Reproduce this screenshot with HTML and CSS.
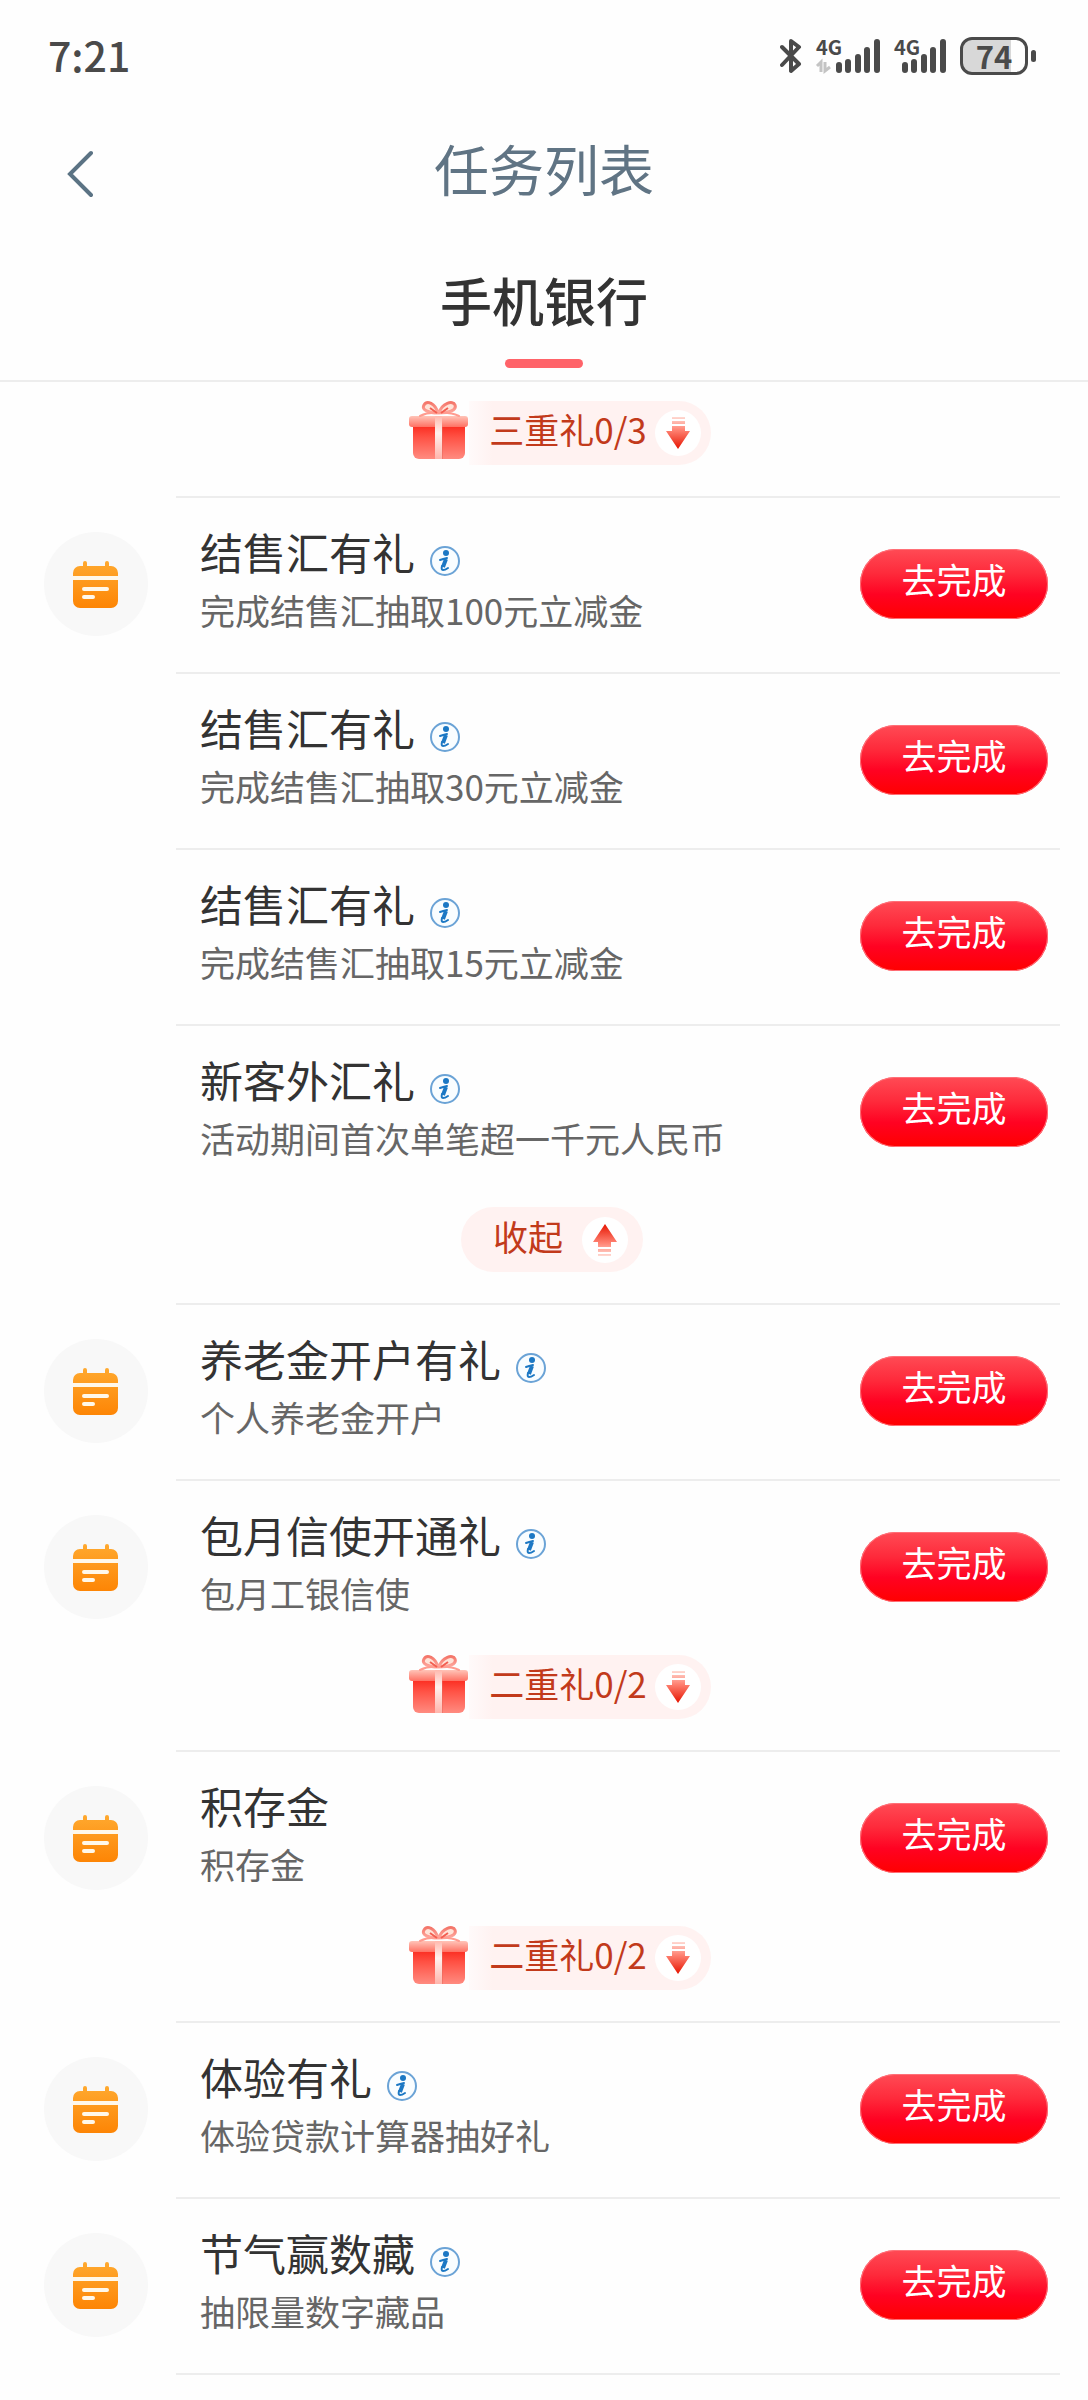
FILE: index.html
```html
<!DOCTYPE html>
<html lang="zh-CN">
<head>
<meta charset="utf-8">
<meta name="viewport" content="width=device-width, initial-scale=1">
<title>任务列表</title>
<link rel="stylesheet" href="styles.css">
</head>
<body>
<svg class="defs" aria-hidden="true">
  <defs>
    <linearGradient id="orange" x1="0" y1="0" x2="0" y2="1"><stop offset="0" stop-color="#ffa92f"/><stop offset="1" stop-color="#fd8505"/></linearGradient>
    <linearGradient id="box" x1="0" y1="0" x2="0" y2="1"><stop offset="0" stop-color="#fb2a1e"/><stop offset=".35" stop-color="#ff5144"/><stop offset="1" stop-color="#ff8b80"/></linearGradient>
    <linearGradient id="lid" x1="0" y1="0" x2="0" y2="1"><stop offset="0" stop-color="#ffc4b8"/><stop offset="1" stop-color="#ff7163"/></linearGradient>
    <linearGradient id="ribbon" x1="0" y1="0" x2="0" y2="1"><stop offset="0" stop-color="#ffb9ae"/><stop offset=".4" stop-color="#fff1ee"/><stop offset="1" stop-color="#ffb5ac"/></linearGradient>
    <linearGradient id="bow" x1="0" y1="0" x2="0" y2="1"><stop offset="0" stop-color="#f4766a"/><stop offset="1" stop-color="#ffaaa0"/></linearGradient>
    <linearGradient id="arrow" gradientUnits="userSpaceOnUse" x1="0" y1="0" x2="0" y2="32"><stop offset="0" stop-color="#ffd9d2"/><stop offset=".4" stop-color="#ff8474"/><stop offset="1" stop-color="#e61400"/></linearGradient>
  </defs>
  <symbol id="calendar" viewBox="0 0 46 47">
    <path fill="url(#orange)" d="M10 5V2a2 2 0 0 1 4 0v3h18V2a2 2 0 0 1 4 0v3h2a7 7 0 0 1 7 7v3H0v-3a7 7 0 0 1 7-7zM0 19h45v21a7 7 0 0 1-7 7H7a7 7 0 0 1-7-7z"/>
    <path fill="#fff8ea" d="M0 15h45v4H0z"/>
    <path stroke="#fff8ea" stroke-width="4" stroke-linecap="round" d="M11 28h23M11 36h9"/>
  </symbol>
  <symbol id="info" viewBox="0 0 32 32">
    <circle cx="16" cy="16" r="14" fill="#f9fdff" stroke="#6ba3d6" stroke-width="2"/>
    <circle cx="17" cy="8" r="3" fill="#1c78c4"/>
    <path fill="none" stroke="#1c78c4" stroke-width="4" stroke-linejoin="round" d="M17 14l-3 8"/>
    <path fill="none" stroke="#1c78c4" stroke-width="2" stroke-linecap="round" d="M11 15q3-1 7-2M13 21q-1 4 1 4t5-2"/>
  </symbol>
  <symbol id="gift" viewBox="0 0 60 60">
    <path fill="url(#box)" d="M4 25h52v28a6 6 0 0 1-6 6H10a6 6 0 0 1-6-6z"/>
    <rect x="0" y="16" width="59" height="11" rx="3" fill="url(#lid)"/>
    <path fill="url(#ribbon)" d="M26 16h7v43h-7z"/>
    <path fill="#e5675a" opacity=".5" d="M33 27h1v32h-1z"/>
    <path fill="#ffe3d8" stroke="url(#bow)" stroke-width="3" d="M29 13C26 3 18 0 15 5s5 8 14 8zM30 13C33 3 44 0 46 5s-6 8-16 8z"/>
    <path fill="none" stroke="#ff9c90" stroke-width="2" stroke-linecap="round" d="M29 13q-10-1-18 3M30 13q11-1 20 3"/>
    <path stroke="#f35f51" stroke-width="2" d="M21 8l7 5M39 8l-7 5"/>
  </symbol>
  <symbol id="down" viewBox="0 0 24 32">
    <path fill="url(#arrow)" d="M6 0h13v2H6zM6 4h13v3H6zM6 9h13v5h5L12 32 0 14h6z"/>
  </symbol>
  <symbol id="up" viewBox="0 0 24 32"><use href="#down" width="24" height="32" transform="rotate(180 12 16)"/></symbol>
</svg>

<header class="top">
  <div class="status">
    <span class="time">7:21</span>
    <div class="status-icons">
      <svg width="22" height="36" viewBox="0 0 22 36" fill="none" stroke="#4a4a4a" stroke-width="4" stroke-linecap="round" stroke-linejoin="round" aria-hidden="true"><path d="M2 9l17 17-8 7V3l8 6L2 27"/></svg>
      <svg class="signal" width="64" height="36" viewBox="0 0 64 36" aria-hidden="true">
        <text x="0" y="17">4G</text>
        <path stroke="#c4c4c4" stroke-width="3" fill="none" d="M1 28l4-4v10M9 24v9l5-4"/>
        <path class="bars" d="M23 27v5M32 24v8M42 19v13M51 12v20M61 4v28"/>
      </svg>
      <svg class="signal" width="52" height="36" viewBox="0 0 52 36" aria-hidden="true">
        <text x="0" y="17">4G</text>
        <path class="bars" d="M11 27v5M20 24v8M30 19v13M39 12v20M49 4v28"/>
      </svg>
      <div class="battery"><span class="level">74</span></div>
    </div>
  </div>
  <div class="nav">
    <button class="back" type="button" aria-label="返回"><svg width="26" height="48" viewBox="0 0 26 48" fill="none" stroke="#5b7384" stroke-width="4" stroke-linecap="round"><path d="M24 3L3 24l21 21"/></svg></button>
    <h1>任务列表</h1>
  </div>
  <nav class="tabs"><a class="tab" href="#tasks">手机银行</a></nav>
</header>

<main id="tasks">
  <div class="more first"><button class="gift" type="button"><svg class="gift-icon"><use href="#gift"/></svg><span class="pill"><span class="label">三重礼0/3</span><span class="dot"><svg><use href="#down"/></svg></span></span></button></div>
  <ul class="tasks">
    <li class="task"><span class="badge"><svg><use href="#calendar"/></svg></span>
      <div class="body"><div class="text"><h2>结售汇有礼<svg class="info"><use href="#info"/></svg></h2><p>完成结售汇抽取100元立减金</p></div><button class="go" type="button">去完成</button></div></li>
    <li class="task">
      <div class="body"><div class="text"><h2>结售汇有礼<svg class="info"><use href="#info"/></svg></h2><p>完成结售汇抽取30元立减金</p></div><button class="go" type="button">去完成</button></div></li>
    <li class="task">
      <div class="body"><div class="text"><h2>结售汇有礼<svg class="info"><use href="#info"/></svg></h2><p>完成结售汇抽取15元立减金</p></div><button class="go" type="button">去完成</button></div></li>
    <li class="task">
      <div class="body"><div class="text"><h2>新客外汇礼<svg class="info"><use href="#info"/></svg></h2><p>活动期间首次单笔超一千元人民币</p></div><button class="go" type="button">去完成</button></div>
      <div class="more fold"><button class="collapse" type="button"><span class="label">收起</span><span class="dot"><svg><use href="#up"/></svg></span></button></div></li>
    <li class="task"><span class="badge"><svg><use href="#calendar"/></svg></span>
      <div class="body"><div class="text"><h2>养老金开户有礼<svg class="info"><use href="#info"/></svg></h2><p>个人养老金开户</p></div><button class="go" type="button">去完成</button></div></li>
    <li class="task"><span class="badge"><svg><use href="#calendar"/></svg></span>
      <div class="body"><div class="text"><h2>包月信使开通礼<svg class="info"><use href="#info"/></svg></h2><p>包月工银信使</p></div><button class="go" type="button">去完成</button></div>
      <div class="more"><button class="gift" type="button"><svg class="gift-icon"><use href="#gift"/></svg><span class="pill"><span class="label">二重礼0/2</span><span class="dot"><svg><use href="#down"/></svg></span></span></button></div></li>
    <li class="task"><span class="badge"><svg><use href="#calendar"/></svg></span>
      <div class="body"><div class="text"><h2>积存金</h2><p>积存金</p></div><button class="go" type="button">去完成</button></div>
      <div class="more"><button class="gift" type="button"><svg class="gift-icon"><use href="#gift"/></svg><span class="pill"><span class="label">二重礼0/2</span><span class="dot"><svg><use href="#down"/></svg></span></span></button></div></li>
    <li class="task"><span class="badge"><svg><use href="#calendar"/></svg></span>
      <div class="body"><div class="text"><h2>体验有礼<svg class="info"><use href="#info"/></svg></h2><p>体验贷款计算器抽好礼</p></div><button class="go" type="button">去完成</button></div></li>
    <li class="task"><span class="badge"><svg><use href="#calendar"/></svg></span>
      <div class="body"><div class="text"><h2>节气赢数藏<svg class="info"><use href="#info"/></svg></h2><p>抽限量数字藏品</p></div><button class="go" type="button">去完成</button></div></li>
  </ul>
</main>
</body>
</html>
```
FILE: styles.css
```css
* { box-sizing: border-box; }
body { margin: 0; padding-bottom: 24px; background: #fefefe; color: #333; font-family: "Noto Sans CJK SC", sans-serif; }
h1, h2, p, ul { margin: 0; padding: 0; }
ul { list-style: none; }
button { border: 0; padding: 0; background: none; font: inherit; color: inherit; cursor: pointer; }
svg { display: block; flex: none; }
.defs { position: absolute; width: 0; height: 0; }

.top { border-bottom: 2px solid #ededed; }
.status { display: flex; justify-content: space-between; align-items: center; height: 112px; padding: 0 52px 0 48px; color: #4a4a4a; }
.time { padding-bottom: 4px; font-size: 41px; font-weight: 500; }
.status-icons { display: flex; align-items: center; gap: 14px; }
.signal { overflow: visible; }
.signal text { font-size: 20px; font-weight: 700; fill: #4a4a4a; }
.signal .bars { stroke: #4a4a4a; stroke-width: 6px; stroke-linecap: round; }
.battery { position: relative; display: flex; align-items: center; justify-content: center; width: 68px; height: 38px; margin-right: 8px; border: 3px solid #4a4a4a; border-radius: 12px; background: linear-gradient(90deg, #d8d8d8 78%, #fefefe 78%); }
.battery::after { content: ""; position: absolute; right: -11px; top: 10px; width: 5px; height: 12px; border-radius: 3px; background: #4a4a4a; }
.level { font-size: 31px; line-height: 32px; font-weight: 700; }

.nav { display: grid; grid-template-columns: 160px 1fr 160px; align-items: center; height: 124px; }
.back { justify-self: start; padding: 0 0 0 67px; }
h1 { grid-column: 2; text-align: center; font-size: 55px; font-weight: 400; line-height: 108px; color: #607484; padding-bottom: 14px; }
.tabs { display: flex; justify-content: center; height: 144px; }
.tab { display: flex; flex-direction: column; align-items: center; justify-content: space-between; padding: 32px 0 12px; font-size: 52px; line-height: 64px; font-weight: 500; color: #333; text-decoration: none; }
.tab::after { content: ""; width: 78px; height: 9px; border-radius: 5px; background: #ff6369; }

.task { display: grid; grid-template-columns: 176px 1fr; }
.badge { display: grid; place-items: center; align-self: center; width: 104px; height: 104px; margin-left: 44px; border-radius: 50%; background: #f8f8f8; }
.badge svg { width: 46px; height: 47px; }
.body { grid-column: 2; display: flex; align-items: center; justify-content: space-between; height: 176px; margin-right: 28px; padding: 0 12px 2px 24px; border-top: 2px solid #ededed; }
.tasks::after { content: ""; display: block; height: 2px; margin: 0 28px 0 176px; background: #ededed; }
.text { padding-bottom: 4px; }
h2 { display: flex; align-items: center; gap: 14px; font-size: 43px; line-height: 56px; font-weight: 400; }
.info { width: 32px; height: 32px; margin-top: 20px; }
p { font-size: 35px; line-height: 62px; color: #666; }
.go { width: 188px; height: 70px; padding-bottom: 10px; border-radius: 35px; background: linear-gradient(#ff4b55, #fe2a3b 35%, #ff0222 65%, #f00); box-shadow: inset 0 0 0 1px #ff7078; color: #fff; font-size: 35px; line-height: 50px; }

.more { grid-column: 1 / -1; display: flex; justify-content: center; padding-bottom: 31px; }
.more.first { padding-top: 19px; }
.more.fold { padding-top: 7px; }
.gift { display: flex; align-items: center; height: 64px; padding-left: 32px; color: #c23a1b; }
.gift-icon { width: 60px; height: 60px; margin-bottom: 6px; }
.pill { display: flex; align-items: center; gap: 8px; height: 64px; padding: 0 10px 0 20px; border-radius: 0 32px 32px 0; background: linear-gradient(90deg, #fffafa, #fff2f1 24px); }
.label { padding-bottom: 8px; font-size: 35px; line-height: 52px; }
.dot { display: grid; place-items: center; width: 46px; height: 46px; border-radius: 50%; background: #fff; }
.dot svg { width: 24px; height: 32px; }
.collapse { display: flex; align-items: center; justify-content: space-between; width: 182px; height: 65px; margin-left: 16px; padding: 0 15px 0 32px; border-radius: 33px; background: #fff2f1; color: #c23a1b; }
```
